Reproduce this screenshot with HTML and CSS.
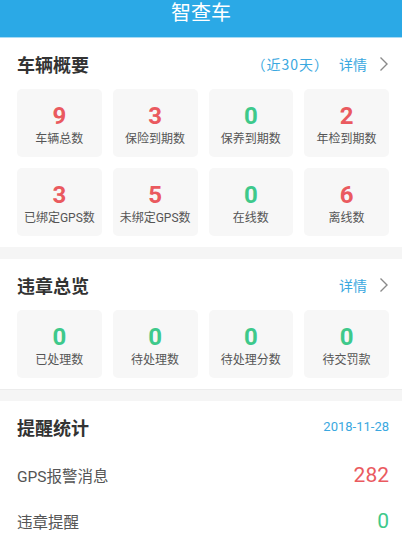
FILE: index.html
```html
<!DOCTYPE html>
<html lang="zh">
<head>
  <meta charset="UTF-8" />
  <meta name="viewport" content="width=device-width, initial-scale=1" />
  <title>智查车</title>
  <link rel="stylesheet" href="styles.css">
</head>
<body>

<header class="topbar">智查车</header>

<section class="panel">
  <div class="panel-head">
    <h3>车辆概要</h3>
    <div class="head-right">
      <span class="range">（近30天）</span>
      <span class="link">详情</span>
      <svg class="chevron" width="10" height="16" viewBox="0 0 10 16"><polyline points="1.5,1.5 8,8 1.5,14.5" fill="none" stroke="#8a8a8a" stroke-width="1.4"/></svg>
    </div>
  </div>
  <div class="stat-grid">
    <div class="stat"><div class="num red">9</div><div class="label">车辆总数</div></div>
    <div class="stat"><div class="num red">3</div><div class="label">保险到期数</div></div>
    <div class="stat"><div class="num green">0</div><div class="label">保养到期数</div></div>
    <div class="stat"><div class="num red">2</div><div class="label">年检到期数</div></div>
    <div class="stat"><div class="num red">3</div><div class="label">已绑定GPS数</div></div>
    <div class="stat"><div class="num red">5</div><div class="label">未绑定GPS数</div></div>
    <div class="stat"><div class="num green">0</div><div class="label">在线数</div></div>
    <div class="stat"><div class="num red">6</div><div class="label">离线数</div></div>
  </div>
</section>

<div class="gap"></div>

<section class="panel bordered">
  <div class="panel-head">
    <h3>违章总览</h3>
    <div class="head-right">
      <span class="link">详情</span>
      <svg class="chevron" width="10" height="16" viewBox="0 0 10 16"><polyline points="1.5,1.5 8,8 1.5,14.5" fill="none" stroke="#8a8a8a" stroke-width="1.4"/></svg>
    </div>
  </div>
  <div class="stat-grid">
    <div class="stat"><div class="num green">0</div><div class="label">已处理数</div></div>
    <div class="stat"><div class="num green">0</div><div class="label">待处理数</div></div>
    <div class="stat"><div class="num green">0</div><div class="label">待处理分数</div></div>
    <div class="stat"><div class="num green">0</div><div class="label">待交罚款</div></div>
  </div>
</section>

<div class="gap small"></div>

<section class="panel">
  <div class="panel-head tall">
    <h3>提醒统计</h3>
    <span class="date">2018-11-28</span>
  </div>
  <div class="row"><span>GPS报警消息</span><span class="count red">282</span></div>
  <div class="row"><span>违章提醒</span><span class="count green">0</span></div>
</section>

</body>
</html>
```

FILE: styles.css
```css
* {
  box-sizing: border-box;
}
body {
  margin: 0;
  font-family: Roboto, "Noto Sans CJK SC", sans-serif;
  background: #f5f5f5;
  color: #333;
  overflow: hidden;
}
.topbar {
  height: 38px;
  padding-top: 1px;
  background: #2ba9e6;
  border-bottom: 1px solid #a8dbf4;
  color: #fff;
  font-size: 20px;
  line-height: 24px;
  text-align: center;
}
.panel {
  background: #fff;
  padding: 0 13px 11px 17px;
}
.panel.bordered {
  border-bottom: 1px solid #ececec;
}
.panel-head {
  height: 51px;
  display: flex;
  align-items: center;
  justify-content: space-between;
}
.panel-head.tall {
  height: 51px;
}
.panel-head h3 {
  margin: 0;
  font-size: 18px;
  font-weight: 700;
  color: #333;
}
.head-right {
  display: flex;
  align-items: center;
  font-size: 14px;
  color: #3aa8e0;
}
.range {
  font-family: "Noto Sans CJK SC", Roboto, sans-serif;
  letter-spacing: 1px;
  margin-right: 10px;
}
.link {
  margin-right: 12px;
}
.chevron {
  display: block;
}
.date {
  font-size: 13px;
  color: #3aa8e0;
}
.stat-grid {
  display: grid;
  grid-template-columns: repeat(4, 1fr);
  gap: 11px;
}
.stat {
  height: 68px;
  background: #f7f7f7;
  border-radius: 5px;
  padding-top: 13px;
  text-align: center;
}
.num {
  font-size: 24px;
  font-weight: 700;
  line-height: 29px;
}
.label {
  font-size: 12px;
  line-height: 16px;
  color: #555;
  white-space: nowrap;
}
.red {
  color: #ea5a5f;
}
.green {
  color: #3ec98b;
}
.gap {
  height: 12px;
}
.gap.small {
  height: 11px;
}
.row {
  height: 46px;
  display: flex;
  align-items: center;
  justify-content: space-between;
  font-size: 15.5px;
  color: #555;
}
.count {
  font-size: 21px;
}
```
